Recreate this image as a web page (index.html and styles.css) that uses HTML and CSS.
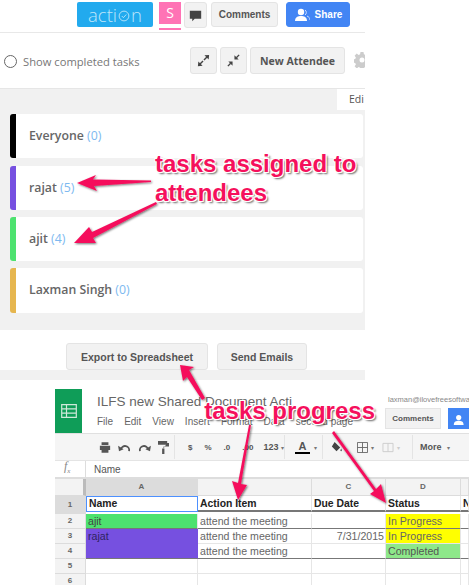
FILE: index.html
```html
<!DOCTYPE html>
<html lang="en">
<head>
    <meta charset="UTF-8">
    <meta name="viewport" content="width=device-width, initial-scale=1.0">
    <title>Action items</title>
    <link rel="stylesheet" href="styles.css">
</head>
<body>
    <div class="app">
        <div class="topbar">
            <div class="logo">acti<svg class="logo-o" viewBox="0 0 16 16"><circle cx="8" cy="8" r="6.500"/><path d="M5 8l2.200 2.200L11 6"/></svg>n</div>
            <div class="avatar">S</div>
            <div class="btn btn-icon chat"><svg viewBox="0 0 16 16" width="13" height="13"><path d="M1 2h14v10H7l-3 3v-3H1z" fill="#444"/></svg></div>
            <div class="btn comments">Comments</div>
            <div class="btn share"><svg viewBox="0 0 16 14" width="16" height="14"><circle cx="7" cy="4" r="3.200" fill="#fff"/><path d="M1 13c0-4 3-5 6-5s6 1 6 5z" fill="#fff"/><path d="M11 2a3 3 0 0 1 0 5M13 8c2 1 3 2 3 4" stroke="#cfe0ff" fill="none"/></svg>Share</div>
        </div>
        <div class="tools">
            <label class="show"><span class="radio"></span>Show completed tasks</label>
            <div class="tool-btns">
                <div class="btn btn-square"><svg viewBox="0 0 16 16" width="15" height="15"><path d="M14 2L9 2.500 13.500 7zM2 14l5-.5L2.500 9z" fill="#444"/><path d="M8.500 7.500L12 4M7.500 8.500L4 12" stroke="#444" stroke-width="1.500"/></svg></div>
                <div class="btn btn-square"><svg viewBox="0 0 16 16" width="15" height="15"><path d="M9 7V2.500L13.500 7zM7 9v4.500L2.500 9z" fill="#444"/><path d="M11 5l3-3M5 11l-3 3" stroke="#444" stroke-width="1.500"/></svg></div>
                <div class="btn attendee">New Attendee</div>
            </div>
            <svg class="gear" viewBox="0 0 16 16" width="16" height="16"><path d="M6.500 0h3l.4 2.200 1.500.7L13.300 1.600l2.100 2.100-1.300 1.900.7 1.500 2.200.4v3l-2.200.4-.7 1.500 1.300 1.900-2.100 2.100-1.900-1.300-1.500.7-.4 2.200h-3l-.4-2.200-1.500-.7-1.900 1.300L.6 14.300l1.300-1.900-.7-1.500L-1 10.500v-3l2.200-.4.700-1.500L.6 3.700l2.100-2.100 1.900 1.300 1.500-.7zM8 5.500a2.500 2.500 0 1 0 0 5 2.500 2.500 0 0 0 0-5z" fill="#ccc"/></svg>
        </div>
        <div class="panel">
            <div class="tab">Edi</div>
            <div class="card black">Everyone <span class="count">(0)</span></div>
            <div class="card purple">rajat <span class="count">(5)</span></div>
            <div class="card green">ajit <span class="count">(4)</span></div>
            <div class="card yellow">Laxman Singh <span class="count">(0)</span></div>
        </div>
        <div class="actions">
            <div class="btn export">Export to Spreadsheet</div>
            <div class="btn emails">Send Emails</div>
        </div>
        <div class="strip"></div>
    </div>

    <div class="sheet">
        <div class="sheet-head">
            <div class="sheet-logo">
                <svg viewBox="0 0 16 14" width="16" height="14"><path d="M.7.700h14.600v12.600H.7zM.7 4.900h14.600M.7 9.100h14.600M5.500.7v12.600" fill="none" stroke="#cfe9da" stroke-width="1.200"/></svg>
            </div>
            <div class="sheet-title">
                <div class="doc-name">ILFS new Shared Document Acti</div>
                <div class="menu"><span>File</span><span>Edit</span><span>View</span><span>Insert</span><span>Format</span><span>Data</span><span>second page</span></div>
            </div>
            <div class="sheet-user">
                <div class="email">laxman@ilovefreesoftware.com</div>
                <div class="user-btns">
                    <div class="sheet-btn">Comments</div>
                    <div class="sheet-share"><svg viewBox="0 0 16 14" width="13" height="12"><circle cx="7" cy="4" r="3.200" fill="#fff"/><path d="M1 13c0-4 3-5 6-5s6 1 6 5z" fill="#fff"/></svg></div>
                </div>
            </div>
        </div>
        <div class="toolbar">
            <div class="tb-group tb-first">
                <svg viewBox="0 0 14 12" width="12" height="11"><path d="M3 0h8v3H3zM1 4h12v5h-2v3H3V9H1z" fill="#555"/></svg>
                <svg viewBox="0 0 14 12" width="13" height="11"><path d="M3 8a4.500 4.500 0 0 1 9 2" fill="none" stroke="#555" stroke-width="2"/><path d="M0 4l1 6 5-2z" fill="#555"/></svg>
                <svg viewBox="0 0 14 12" width="13" height="11"><path d="M11 8a4.500 4.500 0 0 0-9 2" fill="none" stroke="#555" stroke-width="2"/><path d="M14 4l-1 6-5-2z" fill="#555"/></svg>
                <svg viewBox="0 0 12 14" width="11" height="13"><path d="M0 0h10v4H0zM10 2h2v4H6v2H4.500v6H7V8H6z" fill="#555"/></svg>
            </div>
            <div class="tb-format tb-group"><span>$</span><span>%</span><span>.0</span><span>.00</span><span class="num">123 <span class="caret">▾</span></span></div>
            <div class="tb-group tb-color"><span class="color-a">A</span><span class="caret">▾</span></div>
            <div class="tb-group tb-fill">
                <svg class="fill-icon" viewBox="0 0 14 14" width="13" height="13"><path d="M5 1l6 6-4 4-5-5zM12 8c1 2 1 3 0 3s-1-1 0-3z" fill="#444"/></svg>
                <svg viewBox="0 0 12 12" width="11" height="11"><path d="M.5.500h11v11H.5zM6 .5v11M.5 6h11" fill="none" stroke="#666"/></svg><span class="caret">▾</span>
                <svg class="merge" viewBox="0 0 12 12" width="12" height="11"><path d="M.5 1.500h11v9H.5zM6 1.500v9" fill="none" stroke="#ccc"/></svg><span class="caret light">▾</span>
            </div>
            <div class="tb-group tb-more">More <span class="caret">▾</span></div>
        </div>
        <div class="formula"><span class="fx">f<sub>x</sub></span><span class="formula-text">Name</span></div>
        <div class="grid">
            <div class="corner"></div><div class="col col-on">A</div><div class="col"></div><div class="col">C</div><div class="col">D</div><div class="col"></div>

            <div class="row-no row-on r1">1</div><div class="cell head selected r1">Name</div><div class="cell head r1">Action Item</div><div class="cell head r1">Due Date</div><div class="cell head r1">Status</div><div class="cell head r1">N</div>

            <div class="row-no r2">2</div><div class="cell bg-green line">ajit</div><div class="cell line">attend the meeting</div><div class="cell line"></div><div class="cell bg-yellow line">In Progress</div><div class="cell line"></div>

            <div class="row-no">3</div><div class="cell bg-purple">rajat</div><div class="cell">attend the meeting</div><div class="cell right">7/31/2015</div><div class="cell bg-yellow">In Progress</div><div class="cell"></div>

            <div class="row-no">4</div><div class="cell bg-purple line"></div><div class="cell line">attend the meeting</div><div class="cell line"></div><div class="cell bg-lime line">Completed</div><div class="cell line"></div>

            <div class="row-no">5</div><div class="cell"></div><div class="cell"></div><div class="cell"></div><div class="cell"></div><div class="cell"></div>
            <div class="row-no">6</div><div class="cell"></div><div class="cell"></div><div class="cell"></div><div class="cell"></div><div class="cell"></div>
        </div>
    </div>

    <!-- annotations drawn on top of the screenshot -->
    <svg class="arrows" viewBox="0 0 469 585" width="469" height="585">
        <defs>
            <filter id="sh" x="-20%" y="-20%" width="140%" height="140%"><feDropShadow dx="1" dy="1" stdDeviation="1" flood-color="#000" flood-opacity=".55"/></filter>
        </defs>
        <g fill="#f5105c" filter="url(#sh)">
            <path d="M151 180.500L93 179.500 96 175 77 183 97 191 94 186 151 182z"/>
            <path d="M156 202L92 232 89 227 74 243 96 243 93 238 157 204z"/>
            <path d="M205 398L189 370 194 367 180 365 183 381 187 377 202 400z"/>
            <path d="M251 425L241 484 247 485 238 500 232 481 238 483 249 425z"/>
            <path d="M334 431L376 489 381 484 386 503 370 494 374 491 332 433z"/>
        </g>
    </svg>
    <div class="note note-one">tasks assigned to<br>attendees</div>
    <div class="note note-two">tasks progress</div>
</body>
</html>
```

FILE: styles.css
```css
body {
    margin: 0;
    width: 469px;
    height: 585px;
    overflow: hidden;
    position: relative;
    background: white;
    font-family: "Open Sans", sans-serif;
    color: #555;
}
.app {
    width: 365px;
    overflow: hidden;
}
.btn {
    display: flex;
    align-items: center;
    justify-content: center;
    box-sizing: border-box;
    background: #f2f2f2;
    border: 1px solid #e4e4e4;
    border-radius: 3px;
    font-family: "Liberation Sans", sans-serif;
    font-weight: bold;
    color: #555;
}

/* top bar */
.topbar {
    height: 33px;
    box-sizing: border-box;
    padding: 2px 0 0 77px;
    display: flex;
    align-items: flex-start;
    border-bottom: 1px solid #e8e8e8;
}
.logo {
    width: 76px;
    height: 25px;
    background: #22aaee;
    border-radius: 2px;
    color: #bfe6fb;
    font-family: "Open Sans", sans-serif;
    font-weight: 300;
    font-size: 18.500px;
    line-height: 25px;
    display: flex;
    justify-content: center;
    align-items: center;
}
.logo-o {
    width: 12px;
    height: 12px;
    margin: 3px 1px 0;
    fill: none;
    stroke: #bfe6fb;
    stroke-width: 1.200;
}
.avatar {
    width: 22px;
    height: 26px;
    margin-left: 6px;
    background: #ff73b5;
    border-bottom: 2px solid #ff73b5;
    box-shadow: inset 0 -4px 0 white, inset 0 -5px 0 #ff73b5;
    color: white;
    text-align: center;
    font-size: 14px;
    line-height: 22px;
}
.chat {
    width: 23px;
    height: 26px;
    margin-left: 3px;
}
.comments {
    width: 67px;
    height: 25px;
    margin-left: 4px;
    font-size: 10px;
}
.share {
    width: 64px;
    height: 25px;
    margin-left: 8px;
    gap: 5px;
    background: #4285f4;
    border-color: #4285f4;
    color: white;
    font-size: 10px;
}

/* show completed row */
.tools {
    height: 55px;
    box-sizing: border-box;
    padding: 14px 0 0 4px;
    display: flex;
    align-items: flex-start;
}
.show {
    flex: none;
    width: 186px;
    height: 29px;
    display: flex;
    align-items: center;
    gap: 6px;
    font-size: 11.200px;
    color: #777;
}
.radio {
    width: 11px;
    height: 11px;
    border: 1px solid #666;
    border-radius: 50%;
}
.tool-btns {
    flex: none;
    display: flex;
    gap: 3px;
}
.btn-square {
    width: 27px;
    height: 27px;
}
.attendee {
    width: 95px;
    height: 27px;
    font-family: "Open Sans", sans-serif;
    font-size: 10.500px;
}
.gear {
    margin: 5px 0 0 9px;
    flex: none;
}

/* attendees */
.panel {
    height: 242px;
    box-sizing: border-box;
    background: #f1f1f1;
    border-top: 1px solid #e6e6e6;
}
.tab {
    width: 28px;
    height: 21px;
    margin-left: 337px;
    padding-left: 12px;
    box-sizing: border-box;
    background: white;
    font-size: 10.500px;
    line-height: 21px;
    overflow: hidden;
    white-space: nowrap;
}
.card {
    width: 353px;
    height: 44px;
    margin: 4px 0 8px 10px;
    box-sizing: border-box;
    padding-left: 13px;
    background: white;
    border-left: 6px solid black;
    border-radius: 3px;
    font-size: 12.300px;
    font-weight: 600;
    line-height: 44px;
    color: #666;
}
.card + .card {
    margin-top: 0;
}
.purple { border-left-color: #7650e0; margin-bottom: 7px; }
.green { border-left-color: #4de26f; margin-bottom: 7px; }
.yellow { border-left-color: #e6b64f; height: 45px; }
.count {
    font-weight: 400;
    color: #7db9f0;
}
.actions {
    height: 40px;
    box-sizing: border-box;
    padding: 13px 0 0 66px;
    display: flex;
    gap: 9px;
}
.export {
    width: 142px;
    height: 27px;
    font-size: 10.500px;
}
.emails {
    width: 90px;
    height: 27px;
    font-size: 10.500px;
}
.strip {
    height: 10px;
    background: #f1f1f1;
}

/* spreadsheet */
.sheet {
    margin: 9px 0 0 55px;
    font-family: "Liberation Sans", sans-serif;
}
.sheet-head {
    height: 44px;
    display: flex;
    border-bottom: 1px solid #e0e0e0;
}
.sheet-logo {
    flex: none;
    width: 27px;
    height: 44px;
    background: #0f9d58;
    display: flex;
    align-items: center;
    justify-content: center;
}
.sheet-title {
    width: 303px;
    box-sizing: border-box;
    padding-left: 15px;
    flex: none;
}
.doc-name {
    font-size: 13.500px;
    line-height: 14px;
    margin-top: 6px;
    color: #666;
    white-space: nowrap;
}
.menu {
    display: flex;
    gap: 11px;
    margin-top: 7px;
    font-size: 10px;
    line-height: 12px;
    color: #666;
    white-space: nowrap;
}
.sheet-user {
    flex: none;
    width: 84px;
    overflow: hidden;
}
.email {
    margin: 6px 0 0 3px;
    font-size: 7.500px;
    line-height: 9px;
    color: #888;
    white-space: nowrap;
}
.user-btns {
    display: flex;
    gap: 7px;
    margin-top: 4px;
}
.sheet-btn {
    flex: none;
    width: 56px;
    height: 21px;
    background: #f2f2f2;
    border: 1px solid #e4e4e4;
    box-sizing: border-box;
    font-size: 8px;
    font-weight: bold;
    line-height: 19px;
    text-align: center;
    color: #555;
}
.sheet-share {
    flex: none;
    width: 40px;
    height: 21px;
    background: #4285f4;
    padding: 4px 0 0 5px;
    box-sizing: border-box;
}
.toolbar {
    height: 27px;
    box-sizing: border-box;
    background: #f5f5f5;
    border-bottom: 1px solid #e4e4e4;
    display: flex;
    font-size: 8px;
    font-weight: bold;
    color: #555;
}
.tb-group {
    flex: none;
    box-sizing: border-box;
    display: flex;
    align-items: center;
    border-right: 1px solid #e4e4e4;
    margin: 1px 0;
}
.tb-first {
    width: 120px;
    padding-left: 44px;
    gap: 7px;
}
.tb-format {
    width: 110px;
    padding-left: 13px;
    gap: 12px;
    white-space: nowrap;
}
.num {
    margin-left: -2px;
    font-size: 9px;
}
.tb-color {
    width: 38px;
    padding-left: 10px;
    gap: 4px;
}
.color-a {
    width: 15px;
    text-align: center;
    font-size: 11px;
    line-height: 12px;
    border-bottom: 2px solid black;
}
.tb-fill {
    width: 90px;
    padding-left: 7px;
}
.fill-icon {
    margin-right: 14px;
}
.tb-fill .caret {
    margin-left: 3px;
}
.merge {
    margin-left: 8px;
}
.tb-more {
    padding-left: 7px;
    gap: 5px;
    font-size: 9px;
    border-right: none;
}
.caret {
    font-size: 6px;
    font-weight: normal;
    color: #777;
}
.light {
    color: #ccc;
}
.formula {
    height: 16px;
    display: flex;
    align-items: center;
    font-size: 10px;
    color: #555;
    border-bottom: 2px solid #ddd;
}
.fx {
    width: 31px;
    padding-left: 9px;
    box-sizing: border-box;
    font-family: "Liberation Serif", serif;
    font-style: italic;
    font-size: 12px;
    color: #888;
    border-right: 1px solid #ddd;
    margin-right: 8px;
    line-height: 10px;
}
.fx sub {
    font-size: 7px;
}
.grid {
    display: grid;
    grid-template-columns: 31px 112px 114px 74px 75px 8px;
    grid-template-rows: 17px 18px 15px 15px 15px 15px 15px;
    font-size: 10.600px;
}
.corner, .col, .row-no {
    background: #f3f3f3;
    border-right: 1px solid #dcdcdc;
    border-bottom: 1px solid #dcdcdc;
    box-sizing: border-box;
    text-align: center;
    font-size: 8px;
    font-weight: bold;
    color: #666;
}
.col {
    line-height: 16px;
}
.col-on {
    background: #dcdcdc;
}
.row-no {
    line-height: 14px;
}
.row-on {
    background: #dcdcdc;
    line-height: 17px;
}
.corner {
    border-right: 3px solid #bbb;
}
.cell {
    box-sizing: border-box;
    padding: 0 1px 0 2px;
    border-right: 1px solid #e6e6e6;
    border-bottom: 1px solid #e6e6e6;
    line-height: 15px;
    color: #666;
    white-space: nowrap;
    overflow: hidden;
}
.head {
    font-size: 10.400px;
    font-weight: bold;
    color: #222;
    border-bottom: 2px solid #777;
    margin-bottom: 2px;
    line-height: 15px;
}
.selected {
    border: 1px solid #4d90fe;
    line-height: 14px;
}
.line {
    border-bottom: 1px solid #777;
}
.right {
    text-align: right;
}
.bg-green { background: #4de26f; color: #444; }
.bg-purple { background: #7650e0; color: #2f2360; border-right-color: #7650e0; border-bottom-color: #7650e0; }
.bg-purple.line { border-bottom-color: #777; }
.bg-yellow { background: #ffff00; color: #666; }
.bg-lime { background: #8ee88a; color: #555; }

/* overlay annotations */
.arrows {
    position: absolute;
    left: 0;
    top: 0;
}
.note {
    position: absolute;
    font-family: "Liberation Sans", sans-serif;
    font-weight: bold;
    font-size: 24px;
    line-height: 29px;
    color: #f5105c;
    white-space: nowrap;
    text-shadow: 1px 1px 0 white, -1px -1px 0 white, 1px -1px 0 white, -1px 1px 0 white, 2px 2px 2px rgba(0, 0, 0, 0.6);
}
.note-one {
    left: 155px;
    top: 149px;
}
.note-two {
    right: 94px;
    top: 396px;
}
```
